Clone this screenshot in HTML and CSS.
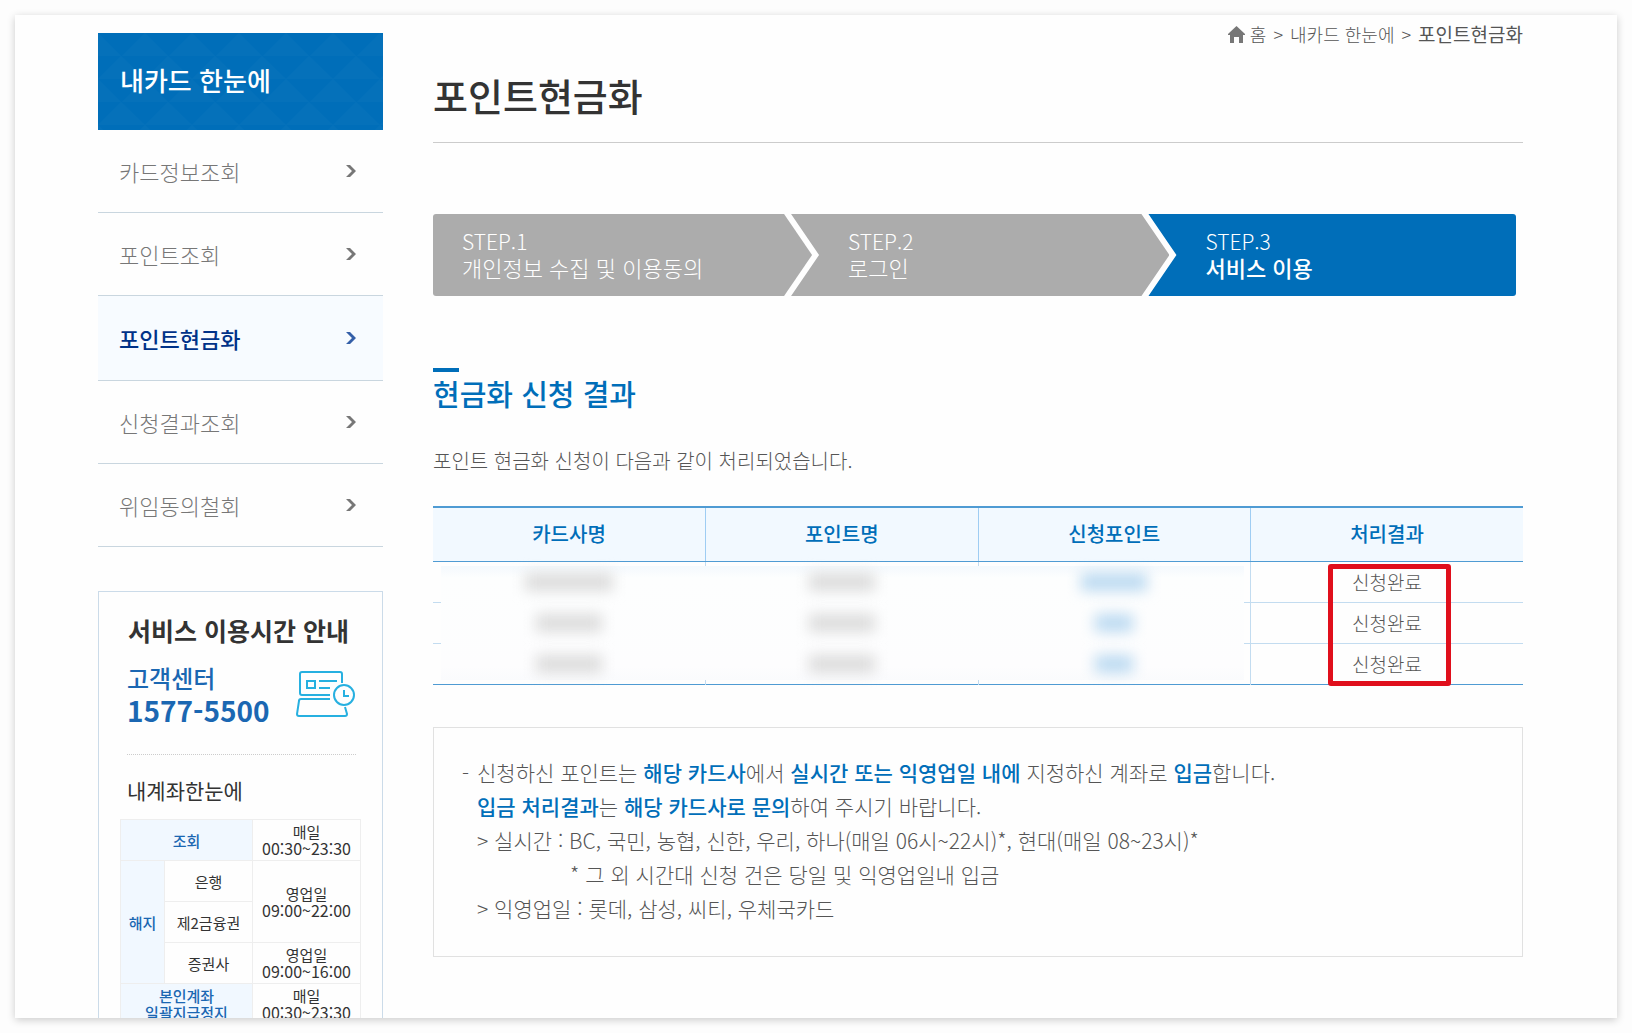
FILE: index.html
```html
<!DOCTYPE html>
<html lang="ko">
<head>
    <meta charset="UTF-8">
    <meta name="viewport" content="width=device-width, initial-scale=1.0">
    <title>포인트현금화</title>
    <link rel="stylesheet" href="styles.css">
</head>
<body>

    <div class="page">

        <aside class="sidebar">
            <h2 class="side-title">내카드 한눈에</h2>
            <nav>
                <ul class="side-menu">
                    <li><a href="#">카드정보조회 <svg class="arrow" viewBox="0 0 13 14"><path d="M1 1h4l6 6-6 6H1l6-6z"/></svg></a></li>
                    <li><a href="#">포인트조회 <svg class="arrow" viewBox="0 0 13 14"><path d="M1 1h4l6 6-6 6H1l6-6z"/></svg></a></li>
                    <li class="active"><a href="#">포인트현금화 <svg class="arrow" viewBox="0 0 13 14"><path d="M1 1h4l6 6-6 6H1l6-6z"/></svg></a></li>
                    <li><a href="#">신청결과조회 <svg class="arrow" viewBox="0 0 13 14"><path d="M1 1h4l6 6-6 6H1l6-6z"/></svg></a></li>
                    <li><a href="#">위임동의철회 <svg class="arrow" viewBox="0 0 13 14"><path d="M1 1h4l6 6-6 6H1l6-6z"/></svg></a></li>
                </ul>
            </nav>

            <div class="service">
                <h3>서비스 이용시간 안내</h3>
                <div class="center">
                    <div>
                        <div class="center-name">고객센터</div>
                        <div class="center-tel">1577-5500</div>
                    </div>
                    <svg class="laptop" viewBox="0 0 60 48">
                        <path d="M34 25H6a2 2 0 0 1-2-2V4a2 2 0 0 1 2-2h38a2 2 0 0 1 2 2v9"/>
                        <path d="M34 29H5a2 2 0 0 0-2 2L1 44a2 2 0 0 0 2 2h46a2 2 0 0 0 2-2l-2-7"/>
                        <rect x="11" y="11" width="8" height="7"/>
                        <path d="M23 11h18M23 18h11"/>
                        <circle cx="48" cy="25" r="10"/>
                        <path d="M48 20v6h5"/>
                    </svg>
                </div>
                <h4>내계좌한눈에</h4>
                <table class="hours">
                    <colgroup>
                        <col class="c1"><col class="c2"><col>
                    </colgroup>
                    <tr>
                        <th colspan="2">조회</th>
                        <td>매일<br><span class="time">00:30~23:30</span></td>
                    </tr>
                    <tr>
                        <th rowspan="3">해지</th>
                        <td>은행</td>
                        <td rowspan="2">영업일<br><span class="time">09:00~22:00</span></td>
                    </tr>
                    <tr>
                        <td>제2금융권</td>
                    </tr>
                    <tr>
                        <td>증권사</td>
                        <td>영업일<br><span class="time">09:00~16:00</span></td>
                    </tr>
                    <tr>
                        <th colspan="2">본인계좌<br>일괄지급정지</th>
                        <td>매일<br><span class="time">00:30~23:30</span></td>
                    </tr>
                </table>
            </div>
        </aside>

        <main class="content">
            <div class="breadcrumb">
                <svg class="home" viewBox="0 0 17 17"><path d="M8.5 0L0 8v1h2v8h4v-6h5v6h4V9h2V8z"/></svg>
                <a href="#">홈</a>
                <span class="sep">&gt;</span>
                <a href="#">내카드 한눈에</a>
                <span class="sep">&gt;</span>
                <strong>포인트현금화</strong>
            </div>

            <h1>포인트현금화</h1>

            <ol class="steps">
                <li><span>STEP.1</span>개인정보 수집 및 이용동의</li>
                <li><span>STEP.2</span>로그인</li>
                <li class="on"><span>STEP.3</span><strong>서비스 이용</strong></li>
            </ol>

            <h2 class="section-title">현금화 신청 결과</h2>
            <p class="desc">포인트 현금화 신청이 다음과 같이 처리되었습니다.</p>

            <div class="result">
                <table class="result-table">
                    <thead>
                        <tr>
                            <th>카드사명</th>
                            <th>포인트명</th>
                            <th>신청포인트</th>
                            <th>처리결과</th>
                        </tr>
                    </thead>
                    <tbody>
                        <tr>
                            <td><i class="smudge long"></i></td>
                            <td><i class="smudge"></i></td>
                            <td><i class="smudge blue"></i></td>
                            <td>신청완료</td>
                        </tr>
                        <tr>
                            <td><i class="smudge"></i></td>
                            <td><i class="smudge"></i></td>
                            <td><i class="smudge blue short"></i></td>
                            <td>신청완료</td>
                        </tr>
                        <tr>
                            <td><i class="smudge"></i></td>
                            <td><i class="smudge"></i></td>
                            <td><i class="smudge blue short"></i></td>
                            <td>신청완료</td>
                        </tr>
                    </tbody>
                </table>
                <div class="mask"></div>
                <div class="mark"></div>
            </div>

            <div class="note">
                <p class="dash">신청하신 포인트는 <b>해당 카드사</b>에서 <b>실시간 또는 익영업일 내에</b> 지정하신 계좌로 <b>입금</b>합니다.</p>
                <p><b>입금 처리결과</b>는 <b>해당 카드사로 문의</b>하여 주시기 바랍니다.</p>
                <p>&gt; 실시간 : BC, 국민, 농협, 신한, 우리, 하나(매일 06시~22시)*, 현대(매일 08~23시)*</p>
                <p class="sub">* 그 외 시간대 신청 건은 당일 및 익영업일내 입금</p>
                <p>&gt; 익영업일 : 롯데, 삼성, 씨티, 우체국카드</p>
            </div>
        </main>

    </div>

</body>
</html>
```
FILE: styles.css
```css
* {
    box-sizing: border-box;
}

body {
    margin: 0;
    padding: 15px;
    background-color: #fdfdfd;
    color: #555;
    font-family: "Noto Sans CJK KR", "Noto Sans", sans-serif;
    font-weight: 300;
    font-size: 21px;
}

h1, h2, h3, h4, p, ul, ol {
    margin: 0;
    padding: 0;
}

ul, ol {
    list-style: none;
}

a {
    color: inherit;
    text-decoration: none;
}

table {
    width: 100%;
    border-collapse: collapse;
    table-layout: fixed;
}

.page {
    display: flex;
    gap: 50px;
    height: calc(100vh - 30px);
    padding: 0 94px 0 83px;
    overflow: hidden;
    background-color: #fefefe;
    box-shadow: 0 2px 8px rgba(0, 0, 0, 0.2);
}

/* 왼쪽 메뉴 */
.sidebar {
    flex: 0 0 285px;
    padding-top: 18px;
}

.side-title {
    height: 97px;
    padding-left: 22px;
    line-height: 94px;
    font-size: 26px;
    font-weight: 500;
    color: #fff;
    background-color: #006eb9;
    background-image: url("data:image/svg+xml,%3Csvg xmlns='http://www.w3.org/2000/svg' width='47' height='46'%3E%3Cpath d='M0 0L23 23H0zM47 0v23H24zM23 23l24 23H0z' fill='%23fff' fill-opacity='.02'/%3E%3C/svg%3E");
}

.side-menu li {
    height: 83px;
    border-bottom: 1px solid #c9d6df;
}

.side-menu a {
    display: flex;
    justify-content: space-between;
    align-items: center;
    height: 100%;
    padding: 0 25px 0 21px;
    font-size: 22px;
    color: #777;
}

.side-menu .active {
    height: 85px;
    background-color: #f7fbff;
}

.side-menu .active a {
    font-weight: 500;
    color: #003288;
}

.arrow {
    width: 13px;
    height: 14px;
    fill: #777;
}

.active .arrow {
    fill: #345fa8;
}

.service {
    margin-top: 44px;
    padding: 22px 21px 40px;
    border: 1px solid #cbdbe9;
    color: #333;
}

.service h3 {
    padding-left: 8px;
    line-height: 32px;
    font-size: 25px;
    font-weight: 700;
}

.center {
    display: flex;
    justify-content: space-between;
    align-items: center;
    margin: 15px 5px 0 7px;
    padding-bottom: 27px;
    border-bottom: 1px dotted #ccc;
    color: #1b67b2;
}

.center-name {
    line-height: 33px;
    font-size: 24px;
    font-weight: 500;
}

.center-tel {
    line-height: 33px;
    font-size: 28px;
    font-weight: 700;
}

.laptop {
    width: 60px;
    height: 48px;
    fill: none;
    stroke: #27b0e0;
    stroke-width: 2;
}

.service h4 {
    padding: 19px 0 13px 7px;
    line-height: 32px;
    font-size: 21px;
    font-weight: 400;
}

.hours .c1 {
    width: 44px;
}

.hours .c2 {
    width: 88px;
}

.hours th, .hours td {
    height: 41px;
    padding: 3px 0;
    border: 1px solid #eee;
    text-align: center;
    line-height: 17px;
    font-size: 15px;
    font-weight: 400;
}

.hours th {
    background-color: #f1f8ff;
    font-weight: 500;
    color: #1b67b2;
}

.hours .time {
    font-size: 16px;
}

/* 본문 */
.content {
    flex: 1;
    min-width: 0;
}

.breadcrumb {
    display: flex;
    justify-content: flex-end;
    align-items: center;
    gap: 5px;
    padding-top: 7px;
    line-height: 24px;
    font-size: 18px;
}

.breadcrumb strong {
    font-size: 19px;
    font-weight: 400;
}

.breadcrumb .sep {
    padding: 0 2px;
}

.home {
    width: 17px;
    height: 17px;
    fill: #777;
}

h1 {
    margin-top: 24px;
    padding-bottom: 22px;
    border-bottom: 1px solid #ccc;
    line-height: 50px;
    font-size: 38px;
    font-weight: 500;
    color: #333;
}

.steps {
    display: grid;
    grid-template-columns: 35fr 33fr 32fr;
    margin: 71px 7px 0 0;
    border-radius: 3px;
    overflow: hidden;
}

.steps li {
    height: 82px;
    padding: 14px 0 0 29px;
    line-height: 26px;
    font-size: 22px;
    color: #fff;
    white-space: nowrap;
    background-color: #acacac;
    clip-path: polygon(0 0, calc(100% - 28px) 0, 100% 50%, calc(100% - 28px) 100%, 0 100%);
}

/* 다음 단계는 앞 화살표 안쪽으로 겹침 */
.steps li + li {
    margin-left: -21px;
    padding-left: 57px;
    clip-path: polygon(0 0, calc(100% - 28px) 0, 100% 50%, calc(100% - 28px) 100%, 0 100%, 28px 50%);
}

.steps li.on {
    background-color: #006eb9;
    clip-path: polygon(0 0, 100% 0, 100% 100%, 0 100%, 28px 50%);
}

.steps span {
    display: block;
    font-size: 21px;
}

.steps strong {
    font-weight: 500;
}

.section-title {
    margin-top: 72px;
    padding-bottom: 6px;
    line-height: 34px;
    font-size: 29px;
    font-weight: 500;
    color: #006eb9;
}

.section-title::before {
    content: "";
    display: block;
    width: 26px;
    height: 4px;
    margin-bottom: 4px;
    background-color: #006eb9;
}

.desc {
    margin-top: 30px;
    line-height: 30px;
    font-size: 20px;
}

.result {
    position: relative;
    margin-top: 30px;
}

.result-table {
    border-top: 2px solid #4f9bd3;
    border-bottom: 1px solid #4f9bd3;
}

.result-table th {
    height: 54px;
    padding: 0 0 2px;
    border-bottom: 1px solid #4f9bd3;
    background-color: #f2f9ff;
    font-size: 20px;
    font-weight: 500;
    color: #006eb9;
}

.result-table td {
    height: 41px;
    padding: 0;
    text-align: center;
    line-height: 30px;
    font-size: 19px;
}

.result-table tbody tr + tr td {
    border-top: 1px solid #c3dcf0;
}

.result-table th + th {
    border-left: 1px solid #9fcdf3;
}

.result-table td + td {
    border-left: 1px solid #c3dcf0;
}

/* 개인정보 가림 처리 */
.smudge {
    position: relative;
    z-index: 1;
    display: inline-block;
    width: 66px;
    height: 18px;
    margin-bottom: 4px;
    vertical-align: middle;
    background-color: #dcdcdc;
    filter: blur(7px);
}

.smudge.long {
    width: 88px;
}

.smudge.short {
    width: 38px;
}

.smudge.blue {
    background-color: #bcdaf1;
}

.mask {
    position: absolute;
    top: 60px;
    bottom: 5px;
    left: 8px;
    right: calc(25% + 7px);
    background: linear-gradient(#f4f9fd, #fdfefe 12px, #fdfdfe 100px, #fafbfd);
}

/* 처리결과 강조 */
.mark {
    position: absolute;
    top: 58px;
    bottom: -1px;
    right: 72px;
    width: 123px;
    border: 5px solid #e00f1c;
    border-radius: 3px;
}

.note {
    margin-top: 42px;
    padding: 27px 20px 31px 43px;
    border: 1px solid #e1e1e1;
    line-height: 34px;
}

.note b {
    font-weight: 500;
    color: #006eb9;
}

.note .dash::before {
    content: "-";
    display: inline-block;
    width: 15px;
    margin-left: -15px;
}

.note .sub {
    padding-left: 93px;
}
```
